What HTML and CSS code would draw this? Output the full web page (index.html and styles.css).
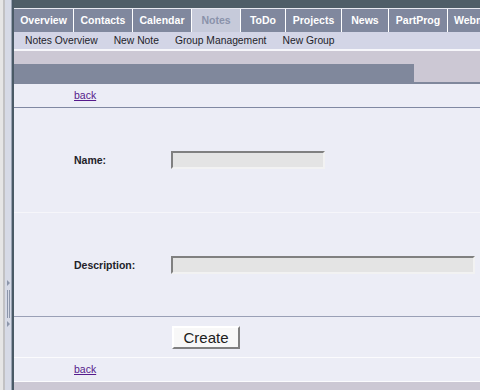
FILE: index.html
```html
<!DOCTYPE html>
<html>
<head>
<meta charset="utf-8">
<link rel="stylesheet" href="styles.css">
</head>
<body>
<div class="splitter">
  <svg width="14" height="390" viewBox="0 0 14 390">
    <rect x="0" y="0" width="3" height="390" fill="#e6e6e6"/>
    <rect x="3" y="0" width="2" height="390" fill="#c2c2c4"/>
    <rect x="5" y="0" width="6" height="390" fill="#d6dae6"/>
    <rect x="11" y="0" width="1" height="390" fill="#98a2b2"/>
    <rect x="12" y="0" width="2" height="390" fill="#4a5a66"/>
    <path d="M7 280 L10 283 L7 286 Z" fill="#8c96aa"/>
    <rect x="7" y="290" width="1" height="28" fill="#8c96aa"/>
    <rect x="9" y="290" width="1" height="28" fill="#8c96aa"/>
    <path d="M7 321 L10 324 L7 327 Z" fill="#8c96aa"/>
  </svg>
</div>
<div class="main">
  <div class="topbar"></div>
  <nav class="tabs">
    <a class="tab">Overview</a>
    <a class="tab">Contacts</a>
    <a class="tab">Calendar</a>
    <a class="tab active">Notes</a>
    <a class="tab">ToDo</a>
    <a class="tab">Projects</a>
    <a class="tab">News</a>
    <a class="tab">PartProg</a>
    <a class="tab">Webmail</a>
  </nav>
  <nav class="submenu">
    <a class="sub">Notes Overview</a>
    <a class="sub">New Note</a>
    <a class="sub">Group Management</a>
    <a class="sub">New Group</a>
  </nav>
  <div class="strip"></div>
  <div class="header">
    <div class="header-left"></div>
    <div class="header-right"></div>
  </div>
  <div class="content">
    <div class="row row-back line-dark"><a class="back" href="#">back</a></div>
    <div class="row row-field line-light">
      <label class="lbl">Name:</label>
      <input class="inp inp-name" type="text">
    </div>
    <div class="row row-field row-field2 line-mid">
      <label class="lbl">Description:</label>
      <input class="inp inp-desc" type="text">
    </div>
    <div class="row row-btn line-white">
      <span class="lbl"></span>
      <button class="btn">Create</button>
    </div>
    <div class="row row-back line-white"><a class="back" href="#">back</a></div>
  </div>
  <div class="footer"></div>
</div>
</body>
</html>
```
FILE: styles.css
```css
html, body {
  margin: 0;
  padding: 0;
}
body {
  width: 480px;
  height: 390px;
  overflow: hidden;
  display: flex;
  font-family: "Liberation Sans", Arial, sans-serif;
  background: #ecedf6;
}
.splitter {
  width: 14px;
  flex: none;
  height: 390px;
}
.splitter svg {
  display: block;
}
.main {
  flex: 1;
  min-width: 0;
  display: flex;
  flex-direction: column;
  overflow: hidden;
}
.topbar {
  height: 8px;
  background: #4f5e67;
  border-bottom: 1px solid #e8eaf0;
  flex: none;
}
.tabs {
  display: flex;
  height: 23px;
  background: #80889e;
  flex: none;
  white-space: nowrap;
}
.tab {
  box-sizing: border-box;
  flex: none;
  height: 23px;
  line-height: 23px;
  text-align: center;
  color: #ffffff;
  font-weight: bold;
  font-size: 10.5px;
  border-right: 1px solid #ffffff;
  background: #80889e;
}
.tab:nth-child(1) { width: 60px; }
.tab:nth-child(2) { width: 59px; }
.tab:nth-child(3) { width: 59px; }
.tab:nth-child(4) { width: 49px; }
.tab:nth-child(5) { width: 45px; }
.tab:nth-child(6) { width: 56px; }
.tab:nth-child(7) { width: 47px; }
.tab:nth-child(8) { width: 59px; }
.tab:nth-child(9) { width: 60px; text-align: left; padding-left: 6px; }
.tab.active {
  background: #c6cada;
  color: #8a92aa;
}
.submenu {
  display: flex;
  height: 17px;
  background: #d3d5e6;
  padding-left: 3px;
  border-bottom: 2px solid #f6f6fa;
  flex: none;
}
.sub {
  font-size: 10.3px;
  line-height: 17px;
  color: #1e1e2a;
  padding: 0 8px;
  white-space: nowrap;
}
.strip {
  height: 13px;
  background: #ccc8d4;
  flex: none;
}
.header {
  display: flex;
  height: 20px;
  flex: none;
}
.header-left {
  flex: 1;
  background: #80889c;
}
.header-right {
  width: 66px;
  height: 18px;
  background: #ccc8d4;
  border-bottom: 2px solid #80889c;
}
.content {
  display: flex;
  flex-direction: column;
  flex: none;
}
.row {
  display: flex;
  align-items: center;
  padding-left: 60px;
}
.row-back {
  height: 23px;
}
.row-field {
  height: 104px;
}
.row-field2 {
  height: 103px;
}
.row-btn {
  height: 40px;
}
.line-dark { border-bottom: 1px solid #8088a2; }
.line-light { border-bottom: 1px solid #f6f6fa; }
.line-mid { border-bottom: 1px solid #9aa0b6; }
.line-white { border-bottom: 1px solid #fbfbfd; }
.back {
  font-size: 10.5px;
  line-height: 12px;
  margin-top: -2px;
  color: #551a8b;
  text-decoration: underline;
}
.lbl {
  width: 97px;
  flex: none;
  font-size: 10.5px;
  font-weight: bold;
  color: #222228;
}
.inp {
  box-sizing: border-box;
  height: 18px;
  margin: 0;
  padding: 0;
  background: #e4e4e4;
  border-style: solid;
  border-width: 2px;
  border-color: #808080 #f2f2f2 #f2f2f2 #808080;
  outline: none;
}
.inp-name { width: 154px; }
.inp-desc { width: 304px; }
.btn {
  box-sizing: border-box;
  width: 68px;
  height: 23px;
  margin: 0 0 0 1px;
  padding: 0;
  background: #f8f8f8;
  border-style: solid;
  border-width: 2px;
  border-color: #ffffff #808080 #808080 #ffffff;
  font-family: "Liberation Sans", Arial, sans-serif;
  font-size: 15px;
  color: #202020;
}
.footer {
  flex: 1;
  background: #ccc8d4;
}
```
